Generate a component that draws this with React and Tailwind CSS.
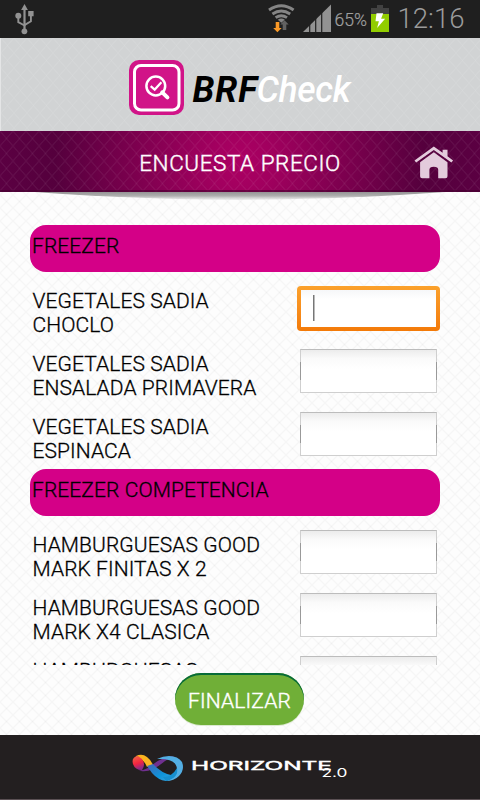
import React from "react";

const groups = [
  {
    title: "FREEZER",
    items: [
      ["VEGETALES SADIA", "CHOCLO"],
      ["VEGETALES SADIA", "ENSALADA PRIMAVERA"],
      ["VEGETALES SADIA", "ESPINACA"],
    ],
  },
  {
    title: "FREEZER COMPETENCIA",
    items: [
      ["HAMBURGUESAS GOOD", "MARK FINITAS X 2"],
      ["HAMBURGUESAS GOOD", "MARK X4 CLASICA"],
      ["HAMBURGUESAS"],
    ],
  },
];

function StatusBar() {
  return (
    <header className="h-[38px] shrink-0 bg-[#1f1f1f]">
      <svg className="block" width="480" height="38" viewBox="0 0 480 38">
        <g fill="none" stroke="#929292" strokeWidth="1.9">
          <path d="M24.5 31V9" strokeWidth="2.2" />
          <path d="M18.3 16v6.2l6.2 3.3M30.9 14v7.3l-6.4 3.8" />
        </g>
        <g fill="#929292">
          <path d="M24.5 4l3.4 6h-6.8z" />
          <circle cx="18.3" cy="15.7" r="3" />
          <path d="M28.2 11h5.4v5.2h-5.4z" />
          <circle cx="24.4" cy="31.3" r="2.9" />
        </g>
        <g fill="none" stroke="#858585" strokeWidth="2.9">
          <path d="M269 10q12.3-8.5 24.6 0" />
          <path d="M272.4 14q8.900-6 17.800 0" />
          <path d="M275.600 17.600q5.700-3.800 11.400 0" />
        </g>
        <path d="M277.800 19.700q3.500-2.200 7 0l-3.500 3z" fill="#858585" />
        <path d="M275.700 22h3.600v6h2.400l-4.300 4.300-4.200-4.300h2.500z" fill="#fb9a27" />
        <path d="M284.500 20.200l4.200 4.200h-2.400v5.600h-3.600v-5.600h-2.400z" fill="#626262" />
        <path d="M303 32L331 4.500V32z" fill="#929292" />
        <path d="M309.700 24v8M315.700 18v14M321.700 11v21" stroke="#1f1f1f" strokeWidth="1.200" />
        <text x="334.500" y="26" fontSize="18.500" textLength="32.500" lengthAdjust="spacingAndGlyphs" fontWeight="300" fill="#a0a0a0" stroke="#a0a0a0" strokeWidth="0.200" fontFamily="Roboto, sans-serif">65%</text>
        <path d="M377 5h6v3h6v6h-18V8h6z" fill="#424242" />
        <path d="M371 14h18v18h-18z" fill="#92cd00" />
        <path d="M376.500 13.300h6.700l-2.100 5.400h4l-8 9.300 1.800-6.700h-3.400z" fill="#fff" />
        <text x="397.500" y="28" fontSize="27" textLength="67" lengthAdjust="spacingAndGlyphs" fontWeight="300" fill="#9b9b9b" fontFamily="Roboto, sans-serif">12:16</text>
      </svg>
    </header>
  );
}

function Brand() {
  return (
    <div className="h-[93px] shrink-0 border-l border-[#e4e5e6] bg-[#d1d3d4] bg-[linear-gradient(to_top_right,transparent_46%,#ffffff12_48%,#ffffff12_52%,transparent_54%),linear-gradient(to_bottom_right,transparent_46%,#ffffff12_48%,#ffffff12_52%,transparent_54%)] bg-[size:13px_15px]">
      <svg className="-ml-px block" width="480" height="93" viewBox="0 38 480 93">
        <rect x="129" y="60" width="55" height="55" rx="10" fill="#d11488" />
        <rect x="134.500" y="65.500" width="44.500" height="44.500" rx="6.500" fill="none" stroke="#fff" strokeWidth="3" />
        <circle cx="155.800" cy="86" r="9.400" fill="none" stroke="#fff" strokeWidth="2.500" />
        <path d="M150.700 86.100l4 3.500 6.700-7.300" fill="none" stroke="#fff" strokeWidth="2.200" />
        <path d="M162.200 92.400l5.200 5" stroke="#fff" strokeWidth="4" strokeLinecap="round" />
        <g transform="translate(192.500 102) scale(0.970 1)" fontSize="36.500" fontStyle="italic" fontFamily="Roboto, sans-serif">
          <text x="0" y="0" textLength="66.500" fontWeight="700" fill="#000">BRF</text>
          <text x="66" y="0" textLength="97" fontWeight="500" fill="#fff">Check</text>
        </g>
      </svg>
    </div>
  );
}

function TitleBar() {
  return (
    <div className="relative h-[61px] shrink-0 bg-[radial-gradient(circle_at_50%_50%,#ac0063_0,#a2005f_30px,#55003d_185px,#5b0042_240px)]">
      <div className="flex h-full items-center justify-center border-b-2 border-[#45002e]/60 bg-[linear-gradient(to_top_right,transparent_45%,#ffffff0c_48%,#ffffff0c_52%,transparent_55%),linear-gradient(to_bottom_right,transparent_45%,#ffffff0c_48%,#ffffff0c_52%,transparent_55%)] bg-[size:13px_15px]">
        <h1 className="pt-1 text-[22.500px] font-light leading-7 tracking-[0.550px] text-white [-webkit-text-stroke:0.4px_#fff]">ENCUESTA PRECIO</h1>
      </div>
      <svg className="absolute left-0 top-0" width="480" height="75" viewBox="0 131 480 75">
        <defs>
          <linearGradient id="shade" x1="0" y1="0" x2="0" y2="1">
            <stop offset="0" stopColor="#949494" />
            <stop offset="0.500" stopColor="#b0b0b0" />
            <stop offset="1" stopColor="#dedede" stopOpacity="0.5" />
          </linearGradient>
        </defs>
        <path d="M35 192H445Q350 199 240 200Q130 199 35 192z" fill="url(#shade)" />
        <g fill="#e3cbdc">
          <path d="M433.800 146.600L414.500 160.400l1.700 2 17.600-12.500 17.600 12.500 1.700-2-5.600-4.100v-6.500h-4.900v2.900z" />
          <path d="M433.800 152.200l-13.700 10.100v13.900q0 2 2 2h7.300v-8.500q0-3 4.400-3t4.400 3v8.500h7.300q2 0 2-2v-13.900z" />
        </g>
      </svg>
    </div>
  );
}

function PriceField({ focused }) {
  if (focused) {
    return (
      <div className="mt-[6px] h-[45px] w-[143px] shrink-0 rounded-[4px] bg-linear-to-b from-[#fba12b] to-[#f37a08] p-1">
        <div className="h-full bg-linear-to-b from-[#f6f7f9] to-white to-[25%] pl-3 pt-[5px]">
          <div className="h-[26px] w-[2px] border-l border-[#777] bg-[#bababa]" />
        </div>
      </div>
    );
  }
  return (
    <div className="mr-[3px] mt-[6px] flex h-[44px] w-[137px] shrink-0 items-center justify-between border border-[#cfcfcf] border-t-[#bcbcbc] bg-linear-to-b from-[#ececec] via-[#fafafa] via-[20%] to-white to-[45%]">
      <div className="-ml-px h-[18px] w-px bg-[#999]" />
      <div className="-mr-px h-[18px] w-px bg-[#999]" />
    </div>
  );
}

function Survey() {
  return (
    <main className="mt-[33px] h-[440px] shrink-0 overflow-hidden pl-[30px] pr-10 text-[21px] font-light leading-6 tracking-[0.080px] text-black [-webkit-text-stroke:0.3px_#000]">
      {groups.map((group, g) => (
        <section key={group.title}>
          <h2 className="mb-2 h-[47px] rounded-2xl bg-[#d40087] pl-[2px] pt-[9px]">{group.title}</h2>
          {group.items.map(([a, b], i) => (
            <div key={i} className="flex h-[63px] justify-between">
              <p className="whitespace-nowrap pl-[2.500px] pt-[9px]">
                {a}
                {b && <br />}
                {b}
              </p>
              <PriceField focused={g === 0 && i === 0} />
            </div>
          ))}
        </section>
      ))}
    </main>
  );
}

function Footer() {
  return (
    <footer className="h-[65px] shrink-0 border-b border-[#5b5054] bg-[#231f20]">
      <svg className="block" width="480" height="64" viewBox="0 735 480 64">
        <defs>
          <linearGradient id="red" x1="0" y1="0" x2="0.300" y2="1">
            <stop offset="0" stopColor="#f06b45" />
            <stop offset="0.600" stopColor="#f32440" />
            <stop offset="1" stopColor="#8b2a8a" />
          </linearGradient>
          <linearGradient id="blue" x1="0" y1="0" x2="1" y2="1">
            <stop offset="0" stopColor="#4664b4" />
            <stop offset="0.600" stopColor="#0d94db" />
            <stop offset="1" stopColor="#43a5df" />
          </linearGradient>
        </defs>
        <path d="M136 756Q142 753 147 757Q151 760 153 765L147 767Q144 759 137 758z" fill="#fbb41f" />
        <path d="M138 756Q131 757 133 764Q135 770 142 770Q146 765 142 759z" fill="url(#red)" />
        <path d="M139 770Q144 771 151 766Q161 757 174 756L165 761Q151 773 141 771z" fill="#70308f" />
        <path d="M147 766L153 764Q162 774 173 775.500L166 781Q158 780 152 773z" fill="url(#blue)" />
        <path d="M157 759Q163 756 169 756Q178 756 182 762Q185 770 179 776Q174 781 166 781Q175 778 177 769Q176 758 157 759z" fill="#53aee3" />
        <path d="M163 777Q172 777 177 768Q179 778 166 781z" fill="#168fd0" />
        <text x="191" y="769.500" fontSize="12" textLength="141" lengthAdjust="spacingAndGlyphs" fontWeight="400" fontFamily="Inter, sans-serif" fill="#fff" stroke="#fff" strokeWidth="0.400">HORIZONTE</text>
        <text x="321.500" y="776.500" fontSize="11.500" textLength="26" lengthAdjust="spacingAndGlyphs" fontWeight="400" fontFamily="Inter, sans-serif" fill="#fff">2.0</text>
      </svg>
    </footer>
  );
}

export default function App() {
  return (
    <div className="flex h-[800px] w-[480px] flex-col overflow-hidden bg-[#fdfdfd] bg-[linear-gradient(to_top_right,transparent_45%,#00000007_48%,#00000007_52%,transparent_55%),linear-gradient(to_bottom_right,transparent_45%,#00000007_48%,#00000007_52%,transparent_55%)] bg-[size:13px_13px] font-['Roboto',sans-serif]">
      <StatusBar />
      <Brand />
      <TitleBar />
      <Survey />
      <div className="flex h-[70px] shrink-0 justify-center pr-px pt-2">
        <button className="h-[52px] w-[129px] rounded-[26px] bg-[#70af37] pt-[3px] text-[21px] font-light leading-6 tracking-[0.150px] text-white shadow-[inset_0_2px_0_#076b38,0_1px_0_#dce9d0] [-webkit-text-stroke:0.4px_#fff]">FINALIZAR</button>
      </div>
      <Footer />
    </div>
  );
}
